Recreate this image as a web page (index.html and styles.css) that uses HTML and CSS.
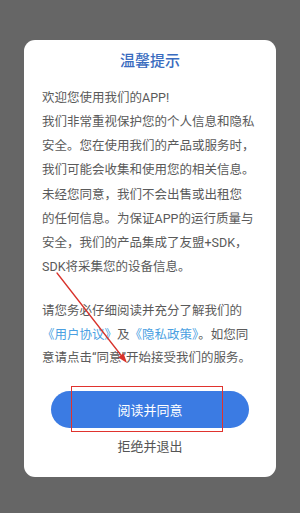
FILE: index.html
```html
<!DOCTYPE html>
<html lang="zh-CN">
<head>
<meta charset="utf-8">
<link rel="stylesheet" href="styles.css">
</head>
<body>
<div class="screen">
  <div class="card">
    <h1 class="title">温馨提示</h1>
    <p class="para">欢迎您使用我们的APP!<br>我们非常重视保护您的个人信息和隐私<br>安全。您在使用我们的产品或服务时，<br>我们可能会收集和使用您的相关信息。<br>未经您同意，我们不会出售或出租您<br>的任何信息。为保证APP的运行质量与<br>安全，我们的产品集成了友盟+SDK，<br>SDK将采集您的设备信息。</p>
    <p class="para para-gap">请您务必仔细阅读并充分了解我们的<br><span class="link">《用户协议》</span>及<span class="link">《隐私政策》</span>。如您同<br>意请点击“同意”开始接受我们的服务。</p>
    <button class="agree">阅读并同意</button>
    <div class="refuse">拒绝并退出</div>
  </div>
  <div class="highlight"></div>
  <svg class="arrow" width="300" height="513" viewBox="0 0 300 513">
    <line x1="57" y1="273" x2="122" y2="356.5" stroke="#d8332c" stroke-width="1.3" stroke-linecap="round"/>
    <polygon points="127,363 118.3,357.4 123.5,353.2" fill="#d8332c"/>
  </svg>
</div>
</body>
</html>
```
FILE: styles.css
```css
html, body {
  margin: 0;
  padding: 0;
}
body {
  background: #666666;
  font-family: Roboto, "Noto Sans CJK SC", sans-serif;
  width: 300px;
  height: 513px;
  overflow: hidden;
}
.screen {
  position: relative;
  width: 300px;
  height: 513px;
  padding-top: 40px;
  box-sizing: border-box;
}
.card {
  margin-left: 24px;
  width: 252px;
  background: #ffffff;
  border-radius: 11px;
  padding: 10px 0 20px;
  box-sizing: border-box;
  display: flex;
  flex-direction: column;
  align-items: center;
}
.title {
  margin: 0;
  font-size: 15px;
  line-height: 22px;
  font-weight: 500;
  color: #3a6cc0;
}
.para {
  margin: 14px 0 0;
  align-self: stretch;
  padding-left: 18px;
  font-size: 12.5px;
  line-height: 24.15px;
  color: #5a5a5a;
  white-space: nowrap;
}
.para-gap {
  margin-top: 20px;
  line-height: 23.5px;
}
.link {
  color: #4a9fe2;
}
.agree {
  margin-top: 21px;
  width: 198px;
  height: 37px;
  border: none;
  border-radius: 19px;
  background: #3b7be3;
  color: #ffffff;
  font-family: inherit;
  font-size: 13px;
  padding: 0;
}
.refuse {
  margin-top: 9px;
  font-size: 13px;
  line-height: 20px;
  color: #555555;
}
.highlight {
  position: absolute;
  left: 71px;
  top: 386px;
  width: 152px;
  height: 46px;
  border: 1.5px solid #e0332e;
  box-sizing: border-box;
}
.arrow {
  position: absolute;
  left: 0;
  top: 0;
}
```
